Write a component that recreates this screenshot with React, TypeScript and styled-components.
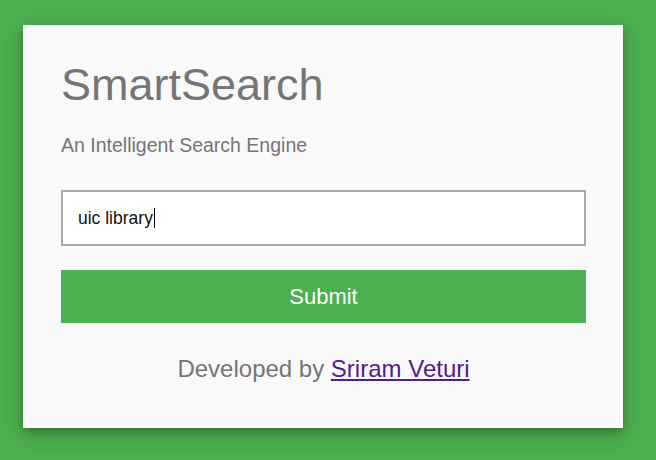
import React from "react";
import styled, { createGlobalStyle } from "styled-components";

const GlobalStyle = createGlobalStyle`
  html, body {
    margin: 0;
    padding: 0;
    background: #4caf50;
    font-family: "Liberation Sans", Arial, sans-serif;
  }
`;

const Page = styled.main`
  min-height: 460px;
  padding: 25px 0 0 23px;
  box-sizing: border-box;
`;

const Card = styled.section`
  width: 600px;
  box-sizing: border-box;
  padding: 35px 37px 45px 38px;
  background: #f9f9f9;
  box-shadow: 0 4px 8px 0 rgba(0, 0, 0, 0.2), 0 6px 20px 0 rgba(0, 0, 0, 0.19);
  display: flex;
  flex-direction: column;
`;

const Title = styled.h1`
  margin: 0;
  font-size: 45px;
  line-height: 50px;
  font-weight: 400;
  color: #757575;
`;

const Subtitle = styled.p`
  margin: 24px 0 0;
  font-size: 19.5px;
  line-height: 22px;
  color: #757575;
`;

const SearchField = styled.div`
  margin-top: 34px;
  height: 56px;
  box-sizing: border-box;
  border: 2px solid #a9a9a9;
  background: #ffffff;
  padding: 0 15px;
  display: flex;
  align-items: center;
  font-size: 17.5px;
  color: #111;
`;

const Caret = styled.span`
  display: inline-block;
  width: 1px;
  height: 20px;
  background: #000;
  margin-left: 1px;
`;

const SubmitButton = styled.button`
  margin-top: 24px;
  height: 53px;
  border: none;
  background: #4caf50;
  color: #ffffff;
  font-family: "Liberation Sans", Arial, sans-serif;
  font-size: 22px;
  cursor: pointer;
`;

const Footer = styled.p`
  margin: 32px 0 0;
  text-align: center;
  font-size: 24px;
  line-height: 28px;
  color: #757575;
`;

const AuthorLink = styled.a`
  color: #551a8b;
  text-decoration: underline;
`;

export default function App() {
  return (
    <>
      <GlobalStyle />
      <Page>
        <Card>
          <Title>SmartSearch</Title>
          <Subtitle>An Intelligent Search Engine</Subtitle>
          <SearchField role="textbox">
            uic library
            <Caret />
          </SearchField>
          <SubmitButton type="button">Submit</SubmitButton>
          <Footer>
            Developed by <AuthorLink href="#">Sriram Veturi</AuthorLink>
          </Footer>
        </Card>
      </Page>
    </>
  );
}
